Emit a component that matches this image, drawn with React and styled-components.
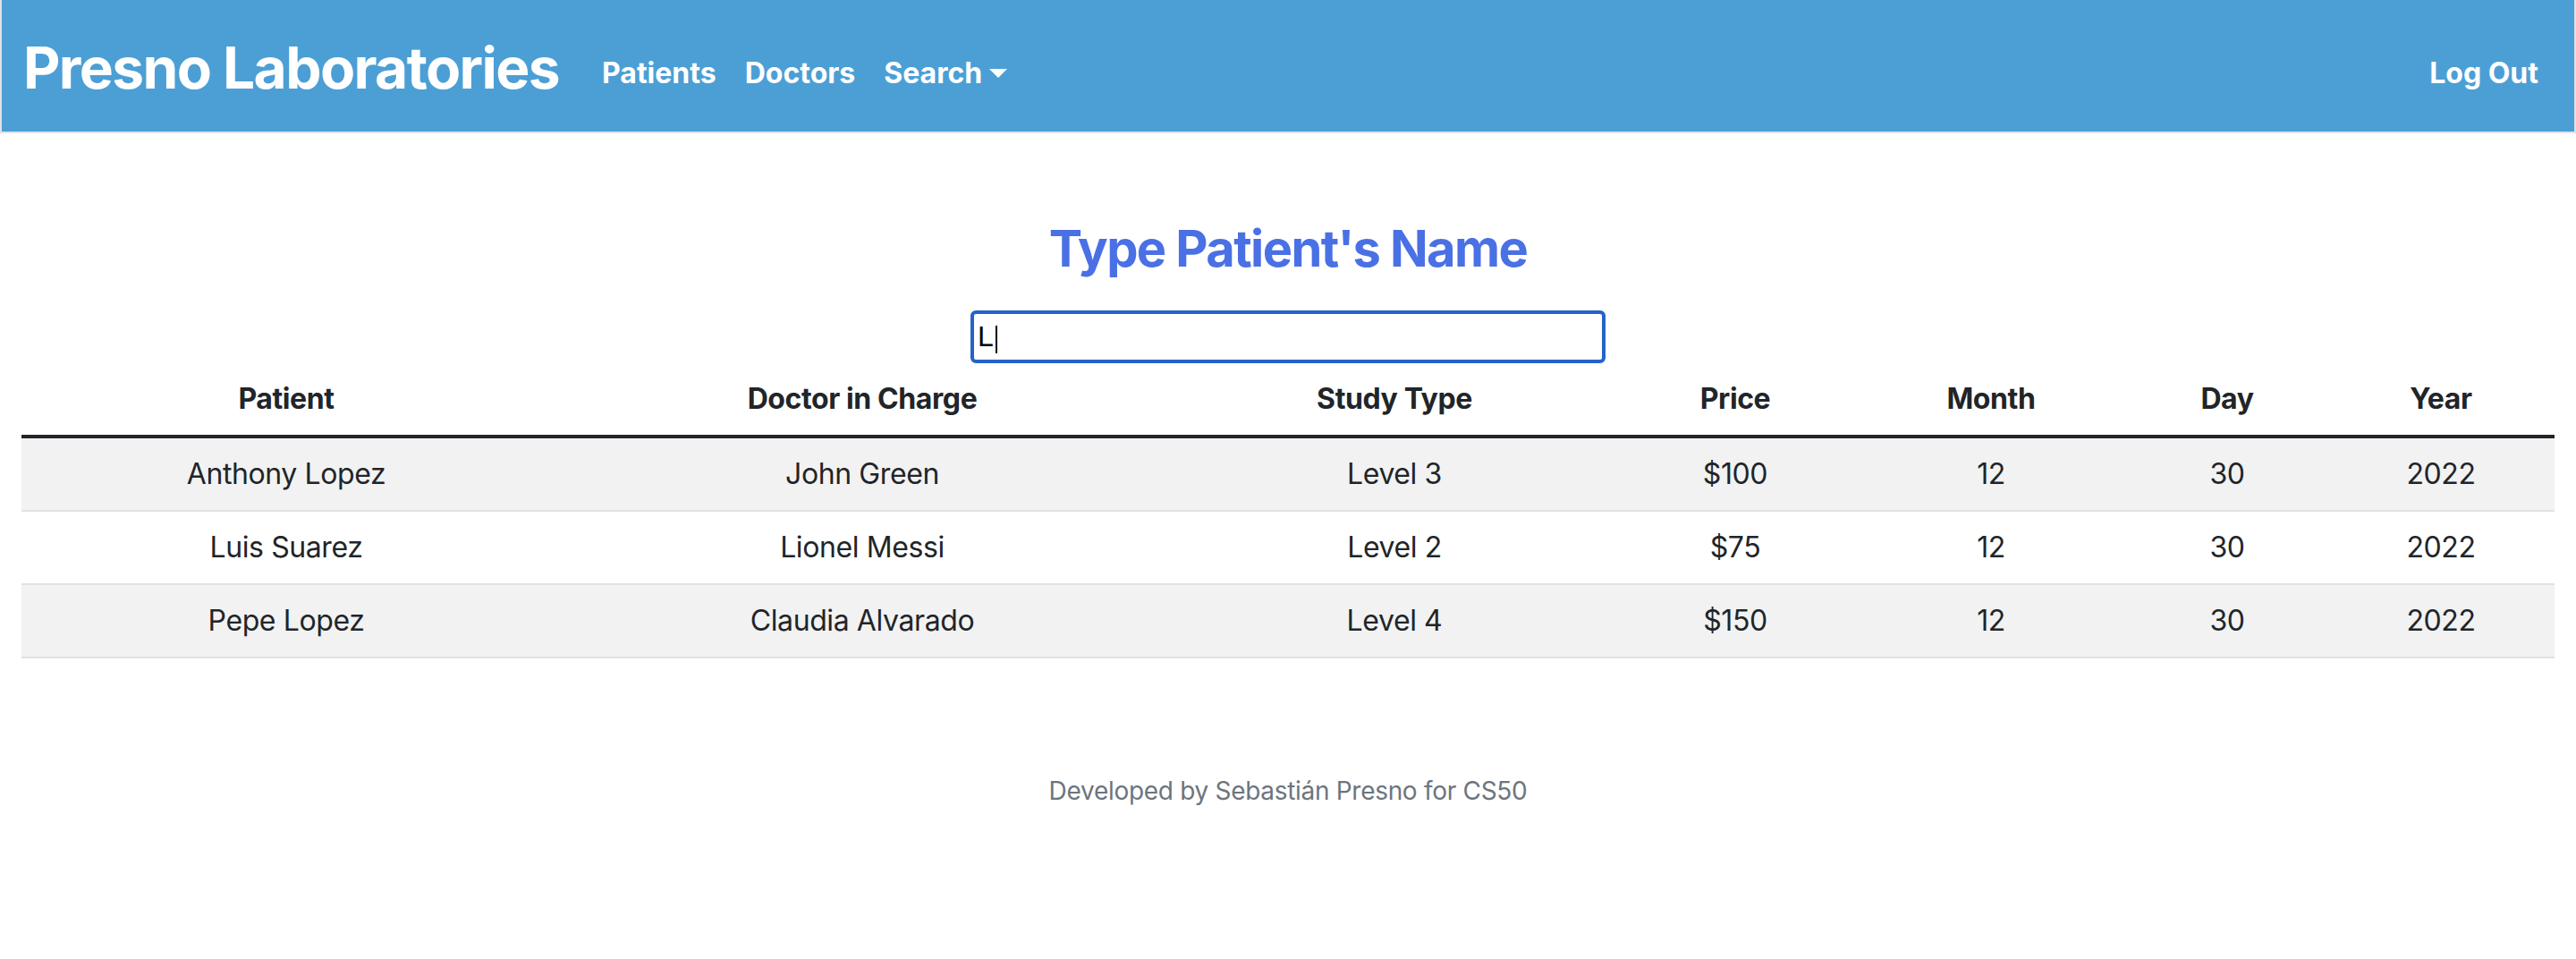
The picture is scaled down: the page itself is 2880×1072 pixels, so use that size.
import styled, { createGlobalStyle } from "styled-components";

const GlobalStyle = createGlobalStyle`
    body {
        margin: 0;
        background: #fff;
        color: #212529;
        font-family: Inter, "Noto Sans", sans-serif;
    }
`;

const studies = [
    { patient: "Anthony Lopez", doctor: "John Green", type: "Level 3", price: "$100", month: 12, day: 30, year: 2022 },
    { patient: "Luis Suarez", doctor: "Lionel Messi", type: "Level 2", price: "$75", month: 12, day: 30, year: 2022 },
    { patient: "Pepe Lopez", doctor: "Claudia Alvarado", type: "Level 4", price: "$150", month: 12, day: 30, year: 2022 },
];

const columns = [
    { label: "Patient", width: 592 },
    { label: "Doctor in Charge", width: 696 },
    { label: "Study Type", width: 494 },
    { label: "Price", width: 268 },
    { label: "Month", width: 304 },
    { label: "Day", width: 224 },
    { label: "Year", width: 254 },
];

export default function App() {
    return (
        <>
            <GlobalStyle />
            <Navbar>
                <Brand href="#">Presno Laboratories</Brand>
                <NavList>
                    <NavLink href="#">Patients</NavLink>
                    <NavLink href="#">Doctors</NavLink>
                    <NavLink href="#" $dropdown>Search</NavLink>
                </NavList>
                <NavLink href="#">Log Out</NavLink>
            </Navbar>

            <Main>
                <Title>Type Patient's Name</Title>
                <SearchBox>
                    <SearchInput type="text" value="L" readOnly />
                    <Caret />
                </SearchBox>

                <Table>
                    <colgroup>
                        {columns.map((c) => (
                            <col key={c.label} style={{ width: c.width }} />
                        ))}
                    </colgroup>
                    <thead>
                        <tr>
                            {columns.map((c) => (
                                <Th key={c.label}>{c.label}</Th>
                            ))}
                        </tr>
                    </thead>
                    <tbody>
                        {studies.map((s, i) => (
                            <Row key={s.patient} $striped={i % 2 === 0}>
                                <Td>{s.patient}</Td>
                                <Td>{s.doctor}</Td>
                                <Td>{s.type}</Td>
                                <Td>{s.price}</Td>
                                <Td>{s.month}</Td>
                                <Td>{s.day}</Td>
                                <Td>{s.year}</Td>
                            </Row>
                        ))}
                    </tbody>
                </Table>
            </Main>

            <Footer>Developed by Sebastián Presno for CS50</Footer>
        </>
    );
}

const Navbar = styled.nav`
    display: flex;
    align-items: center;
    height: 147px;
    padding: 0 24px;
    background: #4c9fd5;
    border: 2px solid #dee2e6;
    border-top: none;
`;

const Brand = styled.a`
    margin-right: 32px;
    padding-top: 4px;
    color: #fff;
    font-size: 64px;
    font-weight: 700;
    letter-spacing: -1.6px;
    text-decoration: none;
    line-height: 1.5;
`;

const NavList = styled.div`
    display: flex;
    flex: 1;
    align-items: center;
`;

const NavLink = styled.a`
    display: inline-flex;
    align-items: center;
    padding: 32px 16px 16px;
    color: #fff;
    font-size: 32px;
    font-weight: 700;
    line-height: 1.5;
    text-decoration: none;

    ${(p) =>
        p.$dropdown &&
        `
        &::after {
            content: "";
            margin-left: 8px;
            border-top: 10px solid #fff;
            border-left: 10px solid transparent;
            border-right: 10px solid transparent;
        }
    `}
`;

const Main = styled.main`
    display: flex;
    flex-direction: column;
    align-items: center;
    padding: 0 24px;
`;

const Title = styled.h3`
    margin: 96px 0 35px;
    color: #4a70e5;
    font-size: 56px;
    font-weight: 700;
    letter-spacing: -1.6px;
    line-height: 1.2;
`;

const SearchBox = styled.div`
    position: relative;
    display: flex;
`;

const SearchInput = styled.input`
    box-sizing: border-box;
    width: 710px;
    height: 59px;
    padding: 0 4px;
    border: 4px solid #2563c9;
    border-radius: 6px;
    outline: none;
    color: #000;
    font-family: "Liberation Sans", Arial, sans-serif;
    font-size: 32px;
`;

const Caret = styled.span`
    position: absolute;
    left: 28px;
    top: 17px;
    width: 2px;
    height: 31px;
    background: #000;
`;

const Table = styled.table`
    width: 100%;
    table-layout: fixed;
    border-collapse: collapse;
    font-size: 32px;
    letter-spacing: -0.4px;
    line-height: 1.5;
    color: #212529;
`;

const Th = styled.th`
    padding: 16px;
    font-weight: 700;
    text-align: center;
    border-bottom: 4px solid #212529;
`;

const Row = styled.tr`
    background: ${(p) => (p.$striped ? "#f2f2f2" : "#fff")};
    border-bottom: 2px solid #dee2e6;
`;

const Td = styled.td`
    padding: 16px;
    text-align: center;
`;

const Footer = styled.footer`
    margin-top: 127px;
    color: #6c757d;
    font-size: 28px;
    letter-spacing: -0.3px;
    line-height: 1.5;
    text-align: center;
`;
